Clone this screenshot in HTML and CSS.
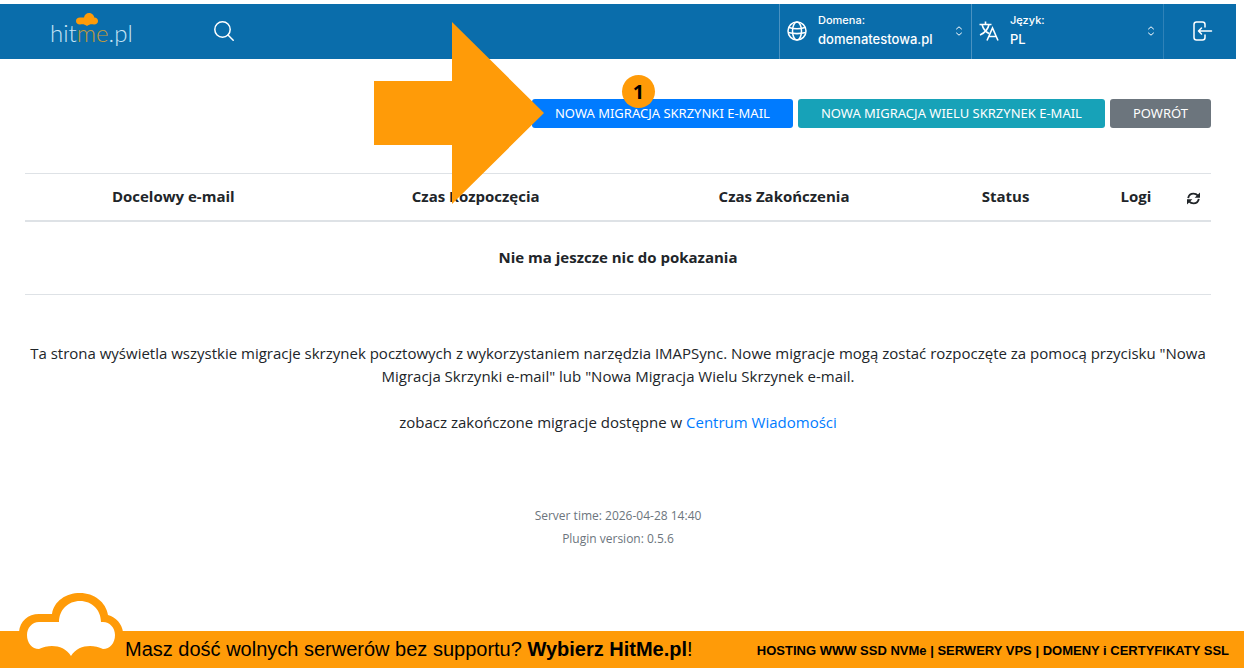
FILE: index.html
```html
<!DOCTYPE html>
<html lang="pl">
<head>
    <meta charset="UTF-8">
    <meta name="viewport" content="width=device-width, initial-scale=1.0">
    <title>hitme.pl</title>
    <link rel="stylesheet" href="styles.css">
</head>
<body>
    <header class="header">
        <a class="logo" href="#">
            <svg class="logo-cloud" viewBox="0 0 22 13" aria-hidden="true">
                <path fill="#ff9b08" d="M4 4.500h4C8.500 1.500 10.500 0 13 0s5 2 5.300 4.500C20.500 4.500 22 6 22 8s-1.500 3.500-4 3.500c-2.500-.5-4.500-.5-7 1.500-2.500-2-4.500-2-7-1.500C1.500 11.500 0 10 0 8s1.500-3.500 4-3.500z"/>
            </svg>
            hit<span>me</span>.pl
        </a>
        <button class="search" type="button" aria-label="Szukaj">
            <svg viewBox="0 0 20 20" width="20" height="20" fill="none" stroke="#fff" stroke-width="1.500" stroke-linecap="round">
                <circle cx="8.500" cy="8.500" r="7.700"/>
                <path d="M14 14l5.200 5.200"/>
            </svg>
        </button>
        <div class="picker">
            <svg viewBox="0 0 20 20" width="20" height="20" fill="none" stroke="#fff" stroke-width="1.500">
                <circle cx="10" cy="10" r="9"/>
                <ellipse cx="10" cy="10" rx="4.500" ry="9"/>
                <path d="M2 6.500c5 1.500 11 1.500 16 0M1 11.500c6 1.500 12 1.500 18 0"/>
            </svg>
            <div class="field">
                <label for="domain">Domena:</label>
                <select id="domain">
                    <option>domenatestowa.pl</option>
                </select>
            </div>
            <svg class="updown" viewBox="0 0 6 10" width="6" height="10" fill="none" stroke="#fff" stroke-linecap="round">
                <path d="M.5 3L3 .8 5.500 3M.5 7L3 9.200 5.500 7"/>
            </svg>
        </div>
        <div class="picker">
            <svg viewBox="0 0 20 20" width="20" height="20" fill="none" stroke="#fff" stroke-width="1.600">
                <path d="M.5 3.500h12M6.500.5v3M3 3.500c1 4 4 7.500 7 9M10 3.500c-1 5-4.500 8.500-9 10.500M8 19.500L13.500 7 19 19.500M10 15.500h7"/>
            </svg>
            <div class="field">
                <label for="lang">Język:</label>
                <select id="lang">
                    <option>PL</option>
                </select>
            </div>
            <svg class="updown" viewBox="0 0 6 10" width="6" height="10" fill="none" stroke="#fff" stroke-linecap="round">
                <path d="M.5 3L3 .8 5.500 3M.5 7L3 9.200 5.500 7"/>
            </svg>
        </div>
        <button class="logout" type="button" aria-label="Wyloguj">
            <svg viewBox="0 0 20 20" width="20" height="20" fill="none" stroke="#fff" stroke-width="1.500" stroke-linecap="round" stroke-linejoin="round">
                <path d="M12 6V3.500Q12 1 9.500 1h-6Q1 1 1 3.500v13Q1 19 3.500 19h6q2.500 0 2.500-2.500V14M18.500 10H5.500M8.500 7l-3 3 3 3"/>
            </svg>
        </button>
    </header>

    <main class="content">
        <div class="actions">
            <div class="first">
                <button class="btn blue" type="button">NOWA MIGRACJA SKRZYNKI E-MAIL</button>
                <svg class="arrow" viewBox="0 0 170 182" aria-hidden="true">
                    <path fill="#ff9b08" d="M0 59h78V0l92 91-92 91v-59H0z"/>
                </svg>
                <span class="step">1</span>
            </div>
            <button class="btn teal" type="button">NOWA MIGRACJA WIELU SKRZYNEK E-MAIL</button>
            <button class="btn gray" type="button">POWRÓT</button>
        </div>

        <table class="migrations">
            <thead>
                <tr>
                    <th class="col-mail">Docelowy e-mail</th>
                    <th class="col-time">Czas Rozpoczęcia</th>
                    <th class="col-time">Czas Zakończenia</th>
                    <th class="col-status">Status</th>
                    <th class="col-logs">Logi</th>
                    <th class="col-refresh">
                        <button class="refresh" type="button" aria-label="Odśwież">
                            <svg viewBox="0 0 14 14" width="13" height="13">
                                <path fill="none" stroke="#212529" stroke-width="2" d="M1.300 6.500C1.800 3.500 4.200 1.700 7 1.700c2 0 3.500.8 4.800 2.300M12.700 7.500c-.5 3-2.900 4.800-5.700 4.800-2 0-3.500-.8-4.800-2.300"/>
                                <path fill="#212529" d="M14 .5v5.700H8.200zM0 13.500V7.800h5.800z"/>
                            </svg>
                        </button>
                    </th>
                </tr>
            </thead>
            <tbody>
                <tr>
                    <td colspan="6">Nie ma jeszcze nic do pokazania</td>
                </tr>
            </tbody>
        </table>

        <div class="about">
            <p>Ta strona wyświetla wszystkie migracje skrzynek pocztowych z wykorzystaniem narzędzia IMAPSync. Nowe migracje mogą zostać rozpoczęte za pomocą przycisku "Nowa Migracja Skrzynki e-mail" lub "Nowa Migracja Wielu Skrzynek e-mail.</p>
            <p>zobacz zakończone migracje dostępne w <a href="#">Centrum Wiadomości</a></p>
        </div>

        <div class="version">
            <div>Server time: 2026-04-28 14:40</div>
            <div>Plugin version: 0.5.6</div>
        </div>
    </main>

    <footer class="banner">
        <svg class="cloud" viewBox="19 593 104 64" aria-hidden="true">
            <path fill="#ff9b08" d="M19 632C20 621 28 614 39 614h13C54 601 66 593 80 593s26 9 28 22c8 2 14 9 15 17v12H19z"/>
            <path fill="#fff" d="M39 622h20c0-12 9-21 21-21s21 9 21 21h2c7 0 12 6 12 13 0 8-5 14-12 14-11-5-25-4-32 7-7-11-21-12-32-7-7 0-12-6-12-14 0-7 5-13 12-13z"/>
        </svg>
        <div class="slogan">Masz dość wolnych serwerów bez supportu? <b>Wybierz HitMe.pl</b>!</div>
        <div class="offer">HOSTING WWW SSD NVMe | SERWERY VPS | DOMENY i CERTYFIKATY SSL</div>
    </footer>
</body>
</html>
```
FILE: styles.css
```css
* {
    box-sizing: border-box;
}
body {
    margin: 0;
    min-height: 100vh;
    display: flex;
    flex-direction: column;
    font-family: "Open Sans", "Noto Sans", sans-serif;
    font-size: 15px;
    line-height: 23px;
    color: #212529;
    background-color: #fff;
}
button {
    border: 0;
    padding: 0;
    background: none;
    font: inherit;
    cursor: pointer;
}
svg {
    display: block;
    flex-shrink: 0;
}

.header {
    display: flex;
    align-items: stretch;
    margin: 4px 8px 0 0;
    height: 55px;
    background-color: #0a6dab;
    color: #fff;
}
.logo {
    position: relative;
    align-self: center;
    width: 84px;
    margin-left: 50px;
    padding-top: 2px;
    font-family: Lato, sans-serif;
    font-size: 24px;
    font-weight: 300;
    line-height: 32px;
    color: #c5e4f5;
    text-decoration: none;
}
.logo span {
    color: #c09a3c;
}
.logo-cloud {
    position: absolute;
    left: 26px;
    top: -2px;
    width: 22px;
}
.search {
    margin-left: 80px;
    margin-right: auto;
    padding-bottom: 2px;
}
.picker {
    display: flex;
    align-items: center;
    gap: 11px;
    width: 192px;
    padding: 0 9px 2px 7px;
    border-left: 1px solid #4a92c1;
}
.field {
    flex: 1;
    display: flex;
    flex-direction: column;
    padding-bottom: 2px;
    font-family: Inter, sans-serif;
    font-weight: 500;
}
.field label {
    font-size: 11px;
    line-height: 18px;
}
.field select {
    appearance: none;
    width: 100%;
    border: 0;
    padding: 0;
    background: none;
    color: #fff;
    font: inherit;
    font-size: 13px;
    line-height: 20px;
}
.logout {
    display: flex;
    align-items: center;
    justify-content: center;
    width: 73px;
    padding: 0 0 2px 6px;
    border-left: 1px solid #2f82b8;
}

.content {
    padding: 40px 33px 0 25px;
    text-align: center;
}
.actions {
    display: flex;
    justify-content: flex-end;
    gap: 5px;
}
.first {
    position: relative;
}
.btn {
    padding: 3px 23px;
    border-radius: 3px;
    color: #fff;
    font-family: "Noto Sans", sans-serif;
    font-size: 13px;
}
.blue {
    background-color: #007bff;
}
.teal {
    background-color: #17a2b8;
}
.gray {
    background-color: #6c757d;
}
.arrow {
    position: absolute;
    left: -158px;
    top: -77px;
    width: 170px;
}
.step {
    position: absolute;
    left: 90px;
    top: -24px;
    width: 33px;
    height: 33px;
    border-radius: 50%;
    background-color: #ff9b08;
    color: #000;
    font-size: 20px;
    font-weight: 700;
    line-height: 33px;
}

.migrations {
    width: 100%;
    margin-top: 45px;
    border-collapse: collapse;
    table-layout: fixed;
}
.migrations th {
    height: 47px;
    padding: 0;
    border-top: 1px solid #dee2e6;
    border-bottom: 2px solid #dee2e6;
}
.migrations td {
    height: 74px;
    padding: 0;
    border-bottom: 1px solid #dee2e6;
    font-weight: 700;
}
.migrations .col-mail {
    width: 25%;
}
.migrations .col-time {
    width: 26%;
}
.migrations .col-logs {
    width: 102px;
    padding-left: 24px;
}
.migrations .col-refresh {
    width: 36px;
    padding-top: 4px;
}
.refresh {
    display: block;
    margin: 0 auto;
}

.about {
    margin-top: 47px;
}
.about p {
    margin: 0 0 23px;
}
.about a {
    color: #007bff;
    text-decoration: none;
}
.version {
    margin-top: 70px;
    font-size: 12px;
    color: #6c757d;
}

.banner {
    position: relative;
    display: flex;
    align-items: center;
    justify-content: space-between;
    margin-top: auto;
    padding: 6px 15px 7px 125px;
    background-color: #ff9b08;
    color: #000;
    font-family: "Liberation Sans", sans-serif;
    line-height: 24px;
}
.cloud {
    position: absolute;
    left: 19px;
    bottom: 11px;
    width: 104px;
}
.slogan {
    font-size: 20px;
}
.offer {
    padding-top: 2px;
    margin-bottom: -2px;
    font-size: 13px;
    font-weight: 700;
}
```
